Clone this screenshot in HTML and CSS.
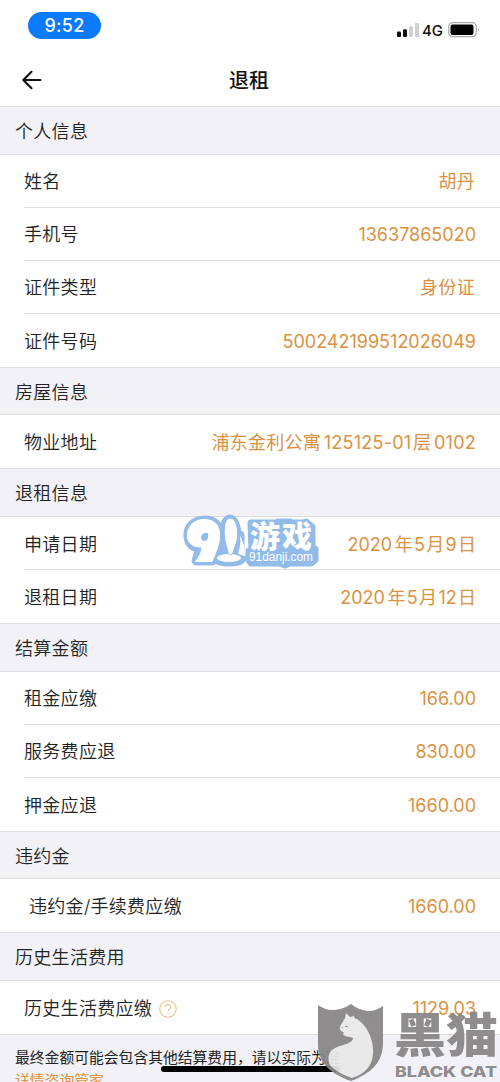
FILE: index.html
```html
<!DOCTYPE html>
<html lang="zh-CN">
<head>
<meta charset="utf-8">
<title>退租</title>
<link rel="stylesheet" href="styles.css">
</head>
<body>
<div class="screen">
  <header class="status">
    <span class="time">9:52</span>
    <div class="indicators">
      <svg class="signal" width="24" height="15" viewBox="0 0 24 15"><rect x="0" y="8.5" width="4" height="5.5" rx="1" fill="#111"/><rect x="6" y="6.2" width="4" height="7.8" rx="1" fill="#111"/><rect x="12" y="3.2" width="4" height="10.8" rx="1" fill="#d0d0d0"/><rect x="18" y="0" width="4" height="14" rx="1" fill="#d0d0d0"/></svg>
      <span class="network">4G</span>
      <svg class="battery" width="32" height="16" viewBox="0 0 32 16"><rect x=".7" y=".7" width="27.6" height="14" rx="4" fill="#fff" stroke="#aaa" stroke-width="1.2"/><rect x="2.5" y="2.5" width="23" height="10.5" rx="2.2" fill="#000"/><path d="M30 5.5q1.6 2.3 0 4.5z" fill="#888"/></svg>
    </div>
  </header>
  <nav class="titlebar">
    <svg class="back" width="20" height="20" viewBox="0 0 20 20" fill="none" stroke="#111" stroke-width="2.1" stroke-linecap="round" stroke-linejoin="round"><path d="M18.5 10H1.5M9.5 1.8L1.3 10l8.2 8.2"/></svg>
    <h1>退租</h1>
  </nav>
  <main>
    <h2>个人信息</h2>
    <dl>
      <div class="row"><dt>姓名</dt><dd class="cjk">胡丹</dd></div>
      <div class="row"><dt>手机号</dt><dd>13637865020</dd></div>
      <div class="row"><dt>证件类型</dt><dd class="cjk">身份证</dd></div>
      <div class="row"><dt>证件号码</dt><dd>500242199512026049</dd></div>
    </dl>
    <h2>房屋信息</h2>
    <dl><div class="row"><dt>物业地址</dt><dd class="address">浦东金利公寓<i>125125-01</i>层<i class="last">0102</i></dd></div></dl>
    <h2>退租信息</h2>
    <dl>
      <div class="row"><dt>申请日期</dt><dd class="date">2020<i></i>年<i>5</i>月<i>9</i>日</dd></div>
      <div class="row"><dt>退租日期</dt><dd class="date">2020<i></i>年<i>5</i>月<i>12</i>日</dd></div>
    </dl>
    <h2>结算金额</h2>
    <dl>
      <div class="row"><dt>租金应缴</dt><dd>166.00</dd></div>
      <div class="row"><dt>服务费应退</dt><dd>830.00</dd></div>
      <div class="row"><dt>押金应退</dt><dd>1660.00</dd></div>
    </dl>
    <h2>违约金</h2>
    <dl><div class="row fee"><dt>违约金/手续费应缴</dt><dd>1660.00</dd></div></dl>
    <h2>历史生活费用</h2>
    <dl><div class="row"><dt>历史生活费应缴<svg class="help" width="18" height="18" viewBox="0 0 18 18" fill="none" stroke="#e6c384" stroke-width="1.1"><circle cx="9" cy="9" r="8.2"/><path d="M6.4 7.1C6.4 3.8 11.7 3.9 11.7 7c0 1.8-2.6 2.1-2.6 4.2M9.1 12.8v1.2"/></svg></dt><dd>1129.03</dd></div></dl>
  </main>
  <footer class="notice"><p>最终金额可能会包含其他结算费用，请以实际为准</p><p class="link">详情咨询管家</p></footer>
  <div class="home"></div>

  <svg class="game-mark" width="140" height="60" viewBox="0 0 140 60">
    <g stroke-linejoin="round" stroke-linecap="round">
      <g fill="#92bbe9" stroke="#92bbe9" stroke-width="9">
        <path d="M23 7C11 7 5 15 6 24c1 8 6 11 12 11L14 48h16C35 39 39 28 38 20 37 12 32 7 23 7z"/>
        <ellipse cx="48" cy="23" rx="7" ry="17"/><ellipse cx="47" cy="45" rx="13" ry="4"/>
        <path d="M58 22v19"/>
        <path d="M69 10h25l2-1h12l3 1h10l3-1 6 5v22h3v11l-4 3h-22l-4 2-6-2H69l-2-3V38h3z" stroke-width="7"/>
      </g>
      <path fill="#fff" fill-rule="evenodd" d="M22 6C11 6 4 14 5 25c2 7 8 10 14 9 1 5-3 10-6 15h17C35 39 39 28 38 20 37 11 32 6 22 6zM23 20c3-1 4 2 3 5s-4 4-6 2-1-6 3-7z"/>
      <ellipse cx="47" cy="45" rx="12" ry="4" fill="#fff"/>
      <path fill="#fff" stroke="#92bbe9" stroke-width="1.2" d="M48 5c-6 0-7 13-5 23l3 12c1 2 4 2 5 0l4-12c2-10 0-23-7-23z"/>
      <path fill="#fff" d="M58 23c4 6 5 14 5 20-3-1-5-1-7-3 2-5 3-10 2-17z"/>
    </g>
    <text class="game-name" x="68" y="33.5" textLength="62">游戏</text>
    <text class="game-url" x="67" y="48" textLength="64" lengthAdjust="spacingAndGlyphs">91danji.com</text>
  </svg>

  <svg class="cat-mark" width="184" height="80" viewBox="0 0 184 80">
    <path fill="#898687" d="M2 3q7 5 14 5 10 0 19-6 9 7 18 7 7 0 14-5v37C67 61 54 72 35 79 15 72 2 61 2 42z"/>
    <path fill="#fff" fill-opacity=".82" d="M30 11l4 4 4-1c0 2 1 3 3 3 11 7 17 22 16 35-1 12-8 20-21 24-9-3-18-8-22-13-4-10 0-16 10-19 7-2 13-4 13-8-4-2-9-1-10-4l1-1-1-1c-2-1-4-2-3-5 2-5 4-6 5-9z"/>
    <path stroke="#898687" stroke-width="1" fill="none" d="M29 24l3 1M26 25l1 1"/>
    <text class="cat-cn" x="78" y="50" textLength="104" lengthAdjust="spacingAndGlyphs">黑猫</text>
    <text class="cat-en" x="79" y="75" textLength="102" lengthAdjust="spacingAndGlyphs">BLACK CAT</text>
  </svg>
</div>
</body>
</html>
```
FILE: styles.css
```css
* { box-sizing: border-box; }
body { margin: 0; background: #fff; font-family: Inter, "Noto Sans CJK SC", sans-serif; color: #222; }
.screen { position: relative; width: 500px; height: 1082px; overflow: hidden; }
.status { height: 53px; display: flex; justify-content: space-between; padding: 12px 20px 0 28px; }
.time { width: 73px; height: 27px; border-radius: 14px; background: #0a7aff; color: #fff; font-size: 18px; font-weight: 500; line-height: 27px; text-align: center; letter-spacing: .3px; }
.indicators { display: flex; align-items: flex-start; padding-top: 10px; }
.signal { margin-top: 1px; }
.network { width: 24px; margin: 0 2px 0 1px; font-size: 15px; font-weight: 500; line-height: 17px; color: #111; }
.battery { width: 32px; }
.titlebar { height: 53px; display: grid; grid-template-columns: 53px 1fr 55px; align-items: center; }
.back { margin-left: 22px; }
h1 { margin: 0; padding-top: 2px; font-size: 20px; font-weight: 500; line-height: 28px; text-align: center; color: #111; }
h2 { margin: 0; height: 48.7px; padding: 1px 0 0 15px; border-top: 1px solid #dedee1; border-bottom: 1px solid #dedee1; background: #f2f2f6; font-size: 18px; font-weight: 350; line-height: 47px; letter-spacing: .3px; }
dl { margin: 0; padding-left: 24px; }
.row { height: 53px; display: flex; justify-content: space-between; align-items: center; padding: 3px 24px 0 0; border-bottom: 1px solid #dedee1; font-size: 18px; line-height: 26px; }
.row:last-child { border-bottom: 0; }
.fee { padding-left: 5px; }
dt { display: flex; align-items: center; letter-spacing: .3px; font-weight: 350; }
dd { margin: 0; color: #dc9141; letter-spacing: 0; font-weight: 400; white-space: nowrap; }
dd i { font-style: normal; margin: 0 1.3px; }
.cjk { letter-spacing: .3px; margin-right: 1px; }
.address { letter-spacing: .25px; }
.address i { margin: 0 1.5px 0 2.8px; }
dd i.last { margin-right: 0; }
.help { margin-left: 7px; }
.notice { height: 60px; padding: 12px 15px 0; border-top: 1px solid #dedee1; background: #f2f2f6; }
.notice p { margin: 0; font-size: 14.8px; line-height: 23px; white-space: nowrap; }
.notice .link { color: #dc9141; }
.home { position: absolute; left: 161px; top: 1066px; width: 179px; height: 6px; border-radius: 3px; background: #000; }
.game-mark { position: absolute; left: 182px; top: 513px; overflow: visible; }
.game-name { font: 900 30px "Noto Sans CJK SC", sans-serif; fill: #fff; }
.game-url { font: 12px "Liberation Sans", sans-serif; fill: #fff; }
.cat-mark { position: absolute; left: 316px; top: 1002px; opacity: .94; }
.cat-cn { font: 900 47px "Noto Sans CJK SC", sans-serif; fill: #898687; }
.cat-en { font: 800 15px Inter, sans-serif; fill: #898687; }
```
